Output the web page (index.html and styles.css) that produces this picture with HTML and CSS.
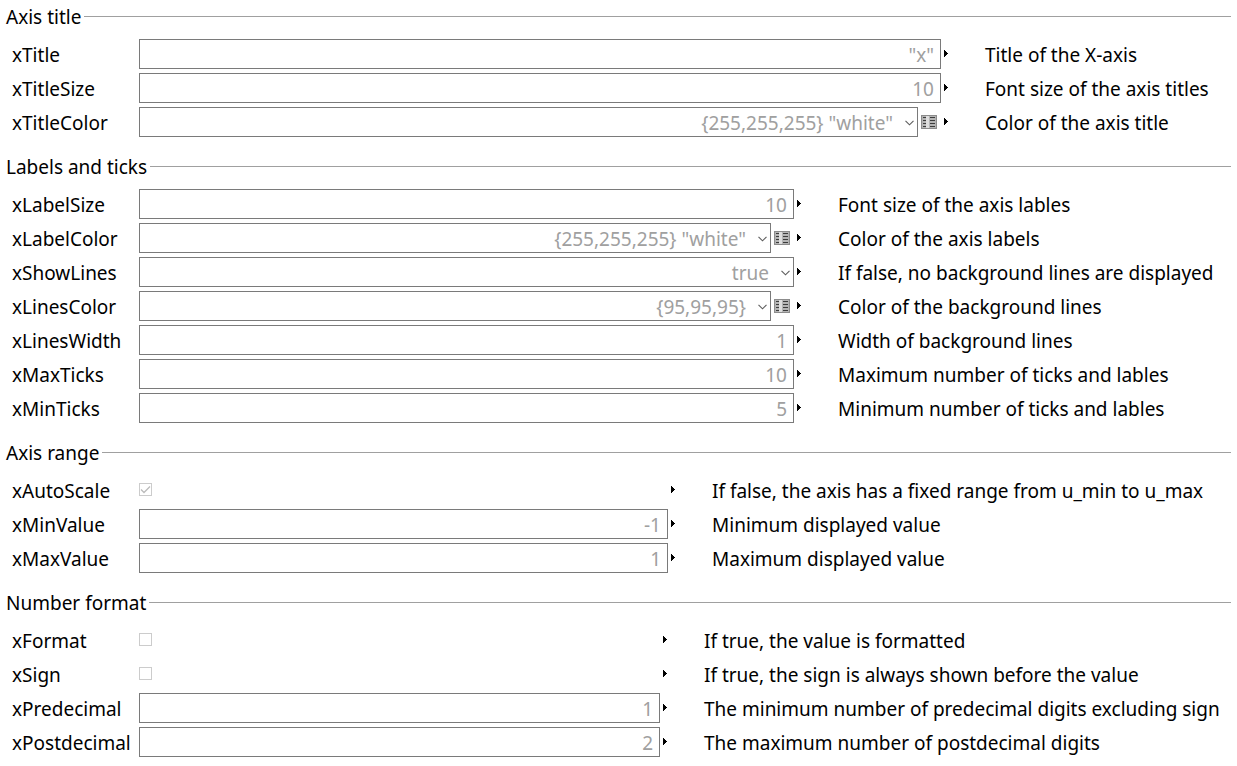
FILE: index.html
```
<!DOCTYPE html>
<html lang="en">
<head>
<meta charset="utf-8">
<title>Axis parameters</title>
<link rel="stylesheet" href="styles.css">
</head>
<body>
<svg class="defs" aria-hidden="true">
  <symbol id="arrow" viewBox="0 0 4 7"><path d="M0 0h1v1h1v1h1v1h1v1h-1v1h-1v1h-1v1h-1z" fill="#000"/></symbol>
  <symbol id="chevron" viewBox="0 0 9 6"><path d="M.5 .8 4.5 4.8 8.5 .8" fill="none" stroke="#5c5c5c" stroke-width="1.1"/></symbol>
  <symbol id="table" viewBox="0 0 16 14"><path d="M0 0h16v14H0z" fill="#8c8c8c"/><path d="M1 1h14v12H1z" fill="#b4b4b4"/><path d="M5 1h3v12H5z" fill="#dedede"/><path d="M2 2.500h3M2 5.500h3M2 8.500h3M2 11.500h3M9 2.500h5M9 5.500h5M9 8.500h5M9 11.500h5" stroke="#3c3c3c"/></symbol>
</svg>
<form class="params">
  <fieldset class="group group-title">
    <legend class="heading"><span>Axis title</span></legend>
    <div class="row"><label class="name" for="xTitle">xTitle</label><div class="field"><input class="box" id="xTitle" type="text" value="&quot;x&quot;" disabled></div><svg class="arrow"><use href="#arrow"/></svg><span class="desc">Title of the X-axis</span></div>
    <div class="row"><label class="name" for="xTitleSize">xTitleSize</label><div class="field"><input class="box" id="xTitleSize" type="text" value="10" disabled></div><svg class="arrow"><use href="#arrow"/></svg><span class="desc">Font size of the axis titles</span></div>
    <div class="row"><label class="name" for="xTitleColor">xTitleColor</label><div class="field"><div class="combo"><select class="box" id="xTitleColor" disabled><option>{255,255,255} "white"</option></select><svg class="chevron"><use href="#chevron"/></svg></div><svg class="table"><use href="#table"/></svg></div><svg class="arrow"><use href="#arrow"/></svg><span class="desc">Color of the axis title</span></div>
  </fieldset>
  <fieldset class="group group-labels">
    <legend class="heading"><span>Labels and ticks</span></legend>
    <div class="row"><label class="name" for="xLabelSize">xLabelSize</label><div class="field"><input class="box" id="xLabelSize" type="text" value="10" disabled></div><svg class="arrow"><use href="#arrow"/></svg><span class="desc">Font size of the axis lables</span></div>
    <div class="row"><label class="name" for="xLabelColor">xLabelColor</label><div class="field"><div class="combo"><select class="box" id="xLabelColor" disabled><option>{255,255,255} "white"</option></select><svg class="chevron"><use href="#chevron"/></svg></div><svg class="table"><use href="#table"/></svg></div><svg class="arrow"><use href="#arrow"/></svg><span class="desc">Color of the axis labels</span></div>
    <div class="row"><label class="name" for="xShowLines">xShowLines</label><div class="field"><div class="combo"><select class="box" id="xShowLines" disabled><option>true</option></select><svg class="chevron"><use href="#chevron"/></svg></div></div><svg class="arrow"><use href="#arrow"/></svg><span class="desc">If false, no background lines are displayed</span></div>
    <div class="row"><label class="name" for="xLinesColor">xLinesColor</label><div class="field"><div class="combo"><select class="box" id="xLinesColor" disabled><option>{95,95,95}</option></select><svg class="chevron"><use href="#chevron"/></svg></div><svg class="table"><use href="#table"/></svg></div><svg class="arrow"><use href="#arrow"/></svg><span class="desc">Color of the background lines</span></div>
    <div class="row"><label class="name" for="xLinesWidth">xLinesWidth</label><div class="field"><input class="box" id="xLinesWidth" type="text" value="1" disabled></div><svg class="arrow"><use href="#arrow"/></svg><span class="desc">Width of background lines</span></div>
    <div class="row"><label class="name" for="xMaxTicks">xMaxTicks</label><div class="field"><input class="box" id="xMaxTicks" type="text" value="10" disabled></div><svg class="arrow"><use href="#arrow"/></svg><span class="desc">Maximum number of ticks and lables</span></div>
    <div class="row"><label class="name" for="xMinTicks">xMinTicks</label><div class="field"><input class="box" id="xMinTicks" type="text" value="5" disabled></div><svg class="arrow"><use href="#arrow"/></svg><span class="desc">Minimum number of ticks and lables</span></div>
  </fieldset>
  <fieldset class="group group-range">
    <legend class="heading"><span>Axis range</span></legend>
    <div class="row"><label class="name" for="xAutoScale">xAutoScale</label><div class="field"><input class="check" id="xAutoScale" type="checkbox" checked disabled></div><svg class="arrow"><use href="#arrow"/></svg><span class="desc">If false, the axis has a fixed range from u_min to u_max</span></div>
    <div class="row"><label class="name" for="xMinValue">xMinValue</label><div class="field"><input class="box" id="xMinValue" type="text" value="-1" disabled></div><svg class="arrow"><use href="#arrow"/></svg><span class="desc">Minimum displayed value</span></div>
    <div class="row"><label class="name" for="xMaxValue">xMaxValue</label><div class="field"><input class="box" id="xMaxValue" type="text" value="1" disabled></div><svg class="arrow"><use href="#arrow"/></svg><span class="desc">Maximum displayed value</span></div>
  </fieldset>
  <fieldset class="group group-format">
    <legend class="heading"><span>Number format</span></legend>
    <div class="row"><label class="name" for="xFormat">xFormat</label><div class="field"><input class="check" id="xFormat" type="checkbox" disabled></div><svg class="arrow"><use href="#arrow"/></svg><span class="desc">If true, the value is formatted</span></div>
    <div class="row"><label class="name" for="xSign">xSign</label><div class="field"><input class="check" id="xSign" type="checkbox" disabled></div><svg class="arrow"><use href="#arrow"/></svg><span class="desc">If true, the sign is always shown before the value</span></div>
    <div class="row"><label class="name" for="xPredecimal">xPredecimal</label><div class="field"><input class="box" id="xPredecimal" type="text" value="1" disabled></div><svg class="arrow"><use href="#arrow"/></svg><span class="desc">The minimum number of predecimal digits excluding sign</span></div>
    <div class="row"><label class="name" for="xPostdecimal">xPostdecimal</label><div class="field"><input class="box" id="xPostdecimal" type="text" value="2" disabled></div><svg class="arrow"><use href="#arrow"/></svg><span class="desc">The maximum number of postdecimal digits</span></div>
  </fieldset>
</form>
</body>
</html>
```

FILE: styles.css
```
* { box-sizing: border-box; }

body {
  margin: 0;
  background: #fff;
  color: #000;
  font: 19px/28px Tahoma, "Noto Sans", sans-serif;
}

.defs { display: none; }

.params {
  display: flex;
  flex-direction: column;
  gap: 14px;
  padding: 1px 6px 9px;
}

.group {
  display: flex;
  flex-direction: column;
  gap: 4px;
  min-width: 0;
  margin: 0;
  padding: 0 0 0 6px;
  border: 0;
}

.heading {
  display: flex;
  align-items: center;
  gap: 3px;
  width: calc(100% + 6px);
  height: 30px;
  margin: 0 0 8px -6px;
  padding: 0;
}

.heading span { padding-top: 2px; }

.heading::after {
  content: "";
  flex: 1;
  height: 1px;
  background: #a0a0a0;
}

.row {
  display: flex;
  align-items: center;
  height: 30px;
}

.name {
  flex: 0 0 127px;
  padding-top: 2px;
  white-space: nowrap;
}

.field {
  flex: 1;
  display: flex;
  align-items: center;
  gap: 3px;
  min-width: 0;
}

.combo {
  position: relative;
  flex: 1;
  display: flex;
}

.box {
  flex: 1;
  width: 100%;
  min-width: 0;
  height: 30px;
  margin: 0;
  padding: 2px 6px 0;
  border: 1px solid #7a7a7a;
  border-radius: 0;
  background: #fff;
  color: #a0a0a0;
  font: inherit;
  line-height: 26px;
  text-align: right;
  opacity: 1;
}

select.box {
  appearance: none;
  padding-right: 24px;
  text-align-last: right;
}

.chevron {
  position: absolute;
  top: 13px;
  right: 4px;
  width: 9px;
  height: 6px;
}

.table {
  flex: none;
  width: 16px;
  height: 14px;
  margin-right: 4px;
}

.arrow {
  flex: none;
  width: 4px;
  height: 7px;
  margin: 0 37px 1px 3px;
}

.check {
  appearance: none;
  width: 13px;
  height: 13px;
  margin: 0 0 1px;
  border: 1px solid #ccc;
  background: #fff;
}

.check:checked {
  background: #fff url("data:image/svg+xml,%3Csvg xmlns='http://www.w3.org/2000/svg' viewBox='0 0 11 11'%3E%3Cpath d='M1 5.500 4 8.500 10 2.500' fill='none' stroke='%23bbb' stroke-width='1.300'/%3E%3C/svg%3E");
}

.desc {
  padding-top: 2px;
  white-space: nowrap;
}

.group-title .desc { flex: 0 0 246px; }
.group-labels .desc { flex: 0 0 393px; }
.group-range .desc { flex: 0 0 519px; }
.group-format .desc { flex: 0 0 527px; }
```
